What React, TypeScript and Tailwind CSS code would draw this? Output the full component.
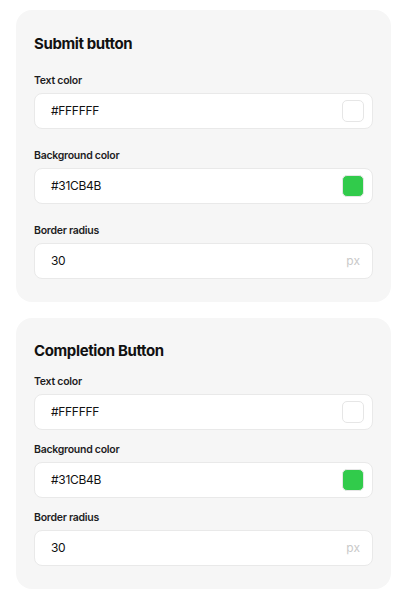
const font = { fontFamily: 'Inter, "Liberation Sans", sans-serif' };

type Field =
  | { label: string; value: string; swatch: string }
  | { label: string; value: string; unit: string };

const fields: Field[] = [
  { label: 'Text color', value: '#FFFFFF', swatch: '#FFFFFF' },
  { label: 'Background color', value: '#31CB4B', swatch: '#31CB4B' },
  { label: 'Border radius', value: '30', unit: 'px' },
];

function FieldRow({ field }: { field: Field }) {
  return (
    <div className="flex flex-col gap-1">
      <label className="text-[10.5px] leading-4 font-semibold tracking-tight text-[#1d1d1f]">{field.label}</label>
      <div className="flex h-9 items-center justify-between rounded-lg border border-[#e9e9e9] bg-white pl-4 pr-2">
        <span className="text-[12px] tracking-tight text-[#111]">{field.value}</span>
        {'swatch' in field ? (
          <span
            className="h-[22px] w-[22px] rounded-[5px] border border-[#e6e6e6]"
            style={{ backgroundColor: field.swatch }}
          />
        ) : (
          <span className="pr-1 text-[12px] text-[#c9c9c9]">{field.unit}</span>
        )}
      </div>
    </div>
  );
}

export default function App() {
  return (
    <div className="flex flex-col gap-4 pl-4 pt-[10px] pb-4 bg-white" style={font}>
      <section className="w-[375px] rounded-2xl bg-[#f6f6f6] px-[18px] pt-[22px] pb-[23px]">
        <h2 className="text-[15px] leading-6 font-bold tracking-tight text-[#111]">Submit button</h2>
        <div className="mt-[17px] flex flex-col gap-[19px]">
          {fields.map((f) => (
            <FieldRow key={f.label} field={f} />
          ))}
        </div>
      </section>
      <section className="w-[375px] rounded-2xl bg-[#f6f6f6] px-[18px] pt-[21px] pb-[23px]">
        <h2 className="text-[15px] leading-6 font-bold tracking-tight text-[#111]">Completion Button</h2>
        <div className="mt-[11px] flex flex-col gap-3">
          {fields.map((f) => (
            <FieldRow key={f.label} field={f} />
          ))}
        </div>
      </section>
    </div>
  );
}
